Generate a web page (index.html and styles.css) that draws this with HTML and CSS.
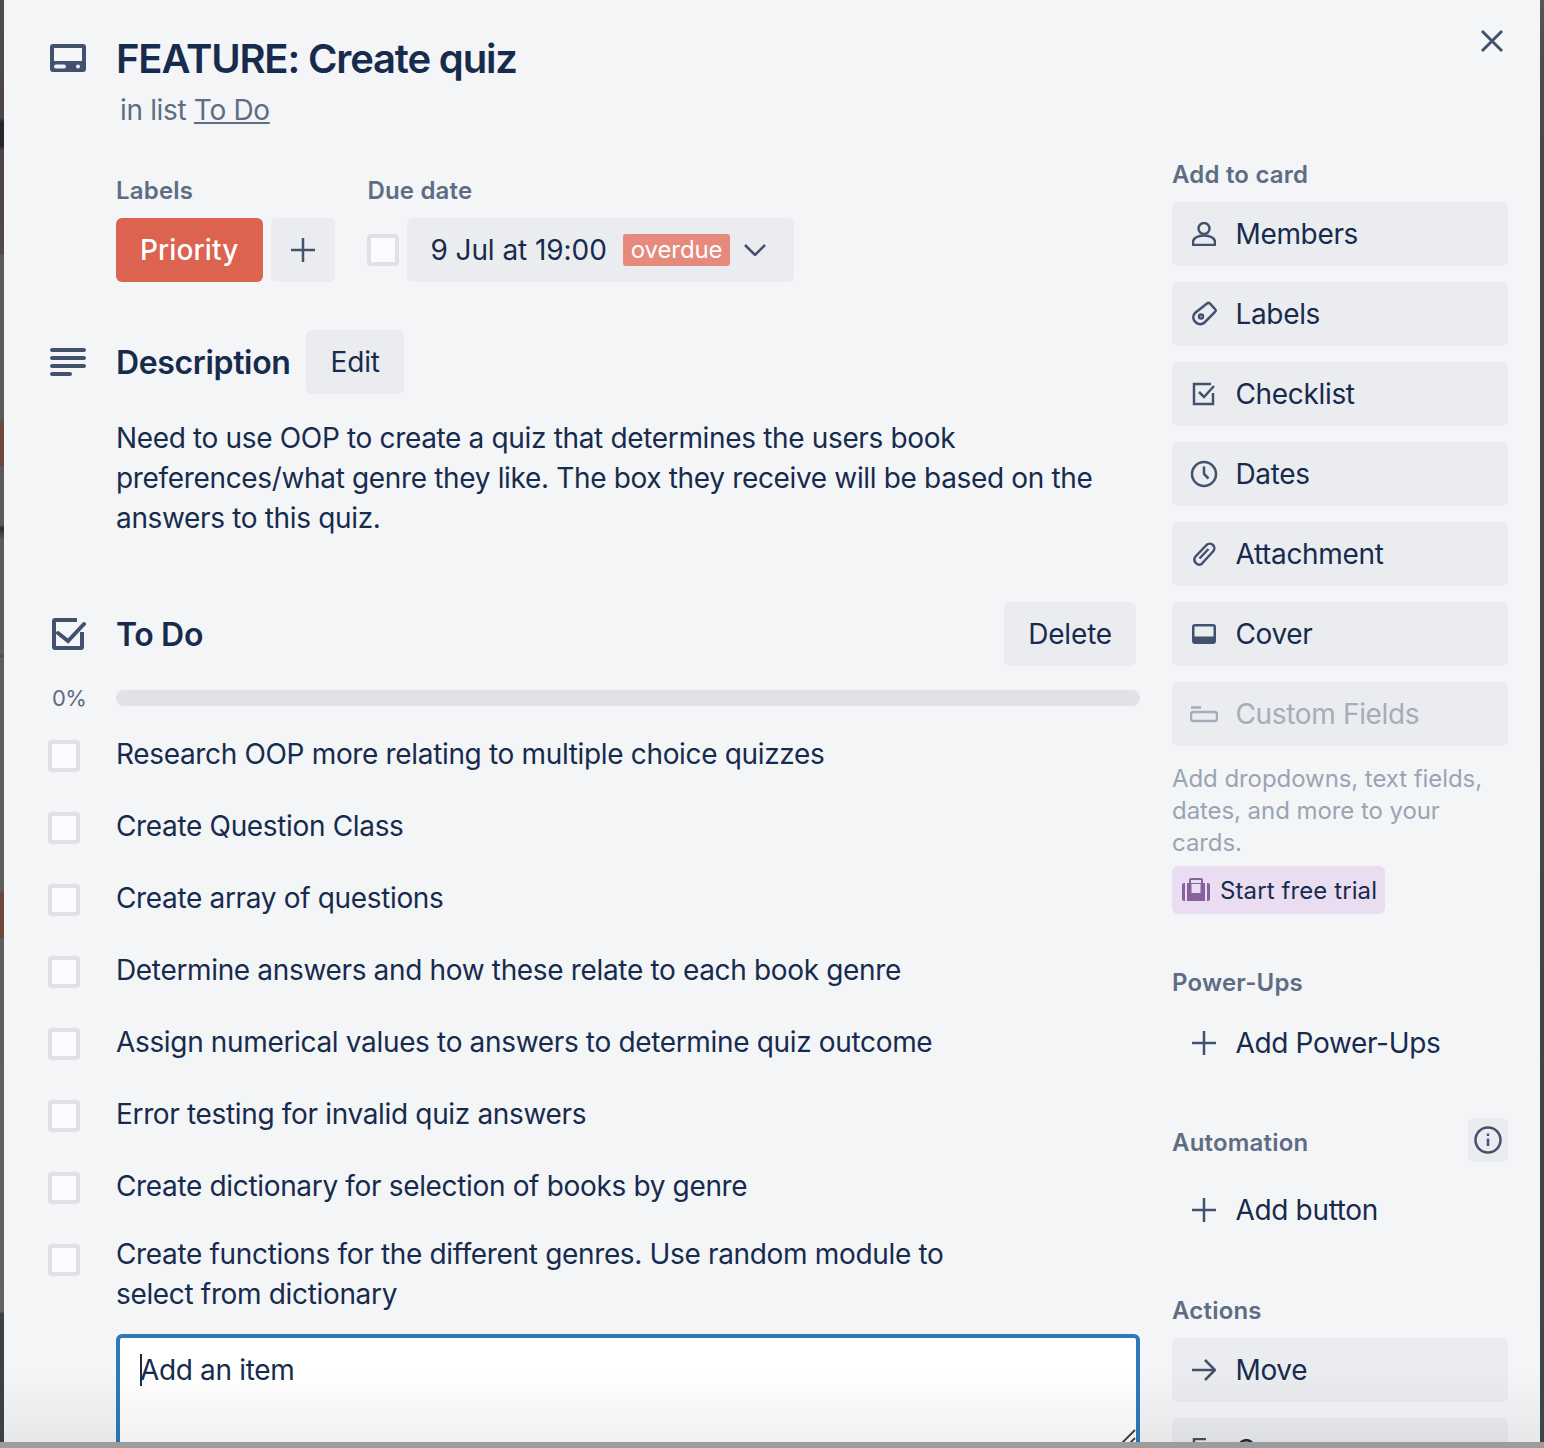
FILE: index.html
```html
<!DOCTYPE html>
<html lang="en">
<head>
  <meta charset="UTF-8">
  <title>FEATURE: Create quiz</title>
  <link rel="stylesheet" href="styles.css">
</head>
<body>
  <div class="screen">
    <div class="strip strip-left"></div>

    <div class="modal">
      <svg class="close" viewBox="0 0 24 24"><path d="M2 2 L22 22 M22 2 L2 22"/></svg>

      <header class="row title-row">
        <svg class="big-icon" viewBox="0 0 36 28"><path fill-rule="evenodd" d="M3 0h30a3 3 0 0 1 3 3v22a3 3 0 0 1-3 3H3a3 3 0 0 1-3-3V3a3 3 0 0 1 3-3zM4 4v13h28V4zM6 20.500a1.500 1.500 0 0 0 0 4h8a2 2 0 0 0 0-4zM28 20.500a2 2 0 0 0 0 4a2 2 0 0 0 0-4z"/></svg>
        <div>
          <h1>FEATURE: Create quiz</h1>
          <p class="in-list">in list <a href="#">To Do</a></p>
        </div>
      </header>

      <div class="columns">
        <main class="main">
          <div class="row meta-row">
            <span></span>
            <div class="meta">
              <div>
                <h3 class="small-head">Labels</h3>
                <div class="meta-line">
                  <span class="label">Priority</span>
                  <button class="btn btn-square"><svg class="icon" viewBox="0 0 24 24"><path class="line" d="M12 0V24M0 12H24"/></svg></button>
                </div>
              </div>
              <div>
                <h3 class="small-head">Due date</h3>
                <div class="meta-line">
                  <span class="check"></span>
                  <button class="btn btn-date">9 Jul at 19:00 <span class="overdue">overdue</span>
                    <svg class="chevron" viewBox="0 0 22 12"><path d="M1 1 L11 11 L21 1"/></svg>
                  </button>
                </div>
              </div>
            </div>
          </div>

          <section class="row desc-head">
            <svg class="big-icon" viewBox="0 0 36 28"><path d="M2 0h32a2 2 0 0 1 0 4H2a2 2 0 0 1 0-4zM2 8h32a2 2 0 0 1 0 4H2a2 2 0 0 1 0-4zM2 16h32a2 2 0 0 1 0 4H2a2 2 0 0 1 0-4zM2 24h18a2 2 0 0 1 0 4H2a2 2 0 0 1 0-4z"/></svg>
            <div class="head-line">
              <h2>Description</h2>
              <button class="btn btn-text btn-edit">Edit</button>
            </div>
          </section>
          <div class="row">
            <span></span>
            <p class="desc">Need to use OOP to create a quiz that determines the users book preferences/what genre they like. The box they receive will be based on the answers to this quiz.</p>
          </div>

          <section class="row todo-head">
            <svg class="todo-icon" viewBox="0 0 34 32"><path d="M30 14v15a1 1 0 0 1-1 1H3a1 1 0 0 1-1-1V3a1 1 0 0 1 1-1h22"/><path stroke-linecap="round" d="M6 15l10 8L32 6"/></svg>
            <div class="head-line spread">
              <h2>To Do</h2>
              <button class="btn btn-text">Delete</button>
            </div>
          </section>
          <div class="row progress-row">
            <span class="percent">0%</span>
            <div class="bar"></div>
          </div>

          <ul class="items">
            <li class="item"><span class="check"></span><span>Research OOP more relating to multiple choice quizzes</span></li>
            <li class="item"><span class="check"></span><span>Create Question Class</span></li>
            <li class="item"><span class="check"></span><span>Create array of questions</span></li>
            <li class="item"><span class="check"></span><span>Determine answers and how these relate to each book genre</span></li>
            <li class="item"><span class="check"></span><span>Assign numerical values to answers to determine quiz outcome</span></li>
            <li class="item"><span class="check"></span><span>Error testing for invalid quiz answers</span></li>
            <li class="item"><span class="check"></span><span>Create dictionary for selection of books by genre</span></li>
            <li class="item item-long"><span class="check"></span><span>Create functions for the different genres. Use random module to select from dictionary</span></li>
          </ul>

          <div class="row">
            <span></span>
            <div class="add-item"><span class="caret"></span>Add an item
              <svg class="grip" viewBox="0 0 16 16"><path d="M1 16L15 2M9 16L15 10"/></svg>
            </div>
          </div>
        </main>

        <aside class="side">
          <h3 class="small-head">Add to card</h3>
          <div class="side-list">
            <button class="btn side-btn"><svg class="icon" viewBox="0 0 24 24"><circle class="line" cx="12" cy="6.500" r="5.500"/><path class="line" d="M1 23v-3c0-4 5-6.500 11-6.500s11 2.500 11 6.500v3z"/></svg>Members</button>
            <button class="btn side-btn"><svg class="icon icon-big" viewBox="0 0 28 28"><path class="line" d="M17 3.500a2 2 0 0 1 2.800 0L25 9a2 2 0 0 1 0 2.800L14.500 22.500a6 6 0 0 1-8.500 0L5 21.500a6 6 0 0 1 0-8.500z"/><circle class="line" cx="11" cy="16.500" r="2"/></svg>Labels</button>
            <button class="btn side-btn"><svg class="icon" viewBox="0 0 24 24"><path class="line" d="M21 11v11H2V2h17"/><path class="line" d="M7 10l5 5L22 4"/></svg>Checklist</button>
            <button class="btn side-btn"><svg class="icon icon-big" viewBox="0 0 28 28"><circle class="line" cx="14" cy="14" r="12"/><path class="line" d="M14 6.500V14l4.500 4.500"/></svg>Dates</button>
            <button class="btn side-btn"><svg class="icon" viewBox="0 0 24 24"><path class="line" d="M9.500 22L21 9.500a4.500 4.500 0 0 0-6.500-6.500L3.500 14.500a5 5 0 0 0 7 7"/><path class="line" d="M7.500 16.500L16.500 7"/></svg>Attachment</button>
            <button class="btn side-btn"><svg class="icon" viewBox="0 0 24 20"><path fill-rule="evenodd" d="M3 0h18a3 3 0 0 1 3 3v14a3 3 0 0 1-3 3H3a3 3 0 0 1-3-3V3a3 3 0 0 1 3-3zM2.500 2.500v10h19v-10z"/></svg>Cover</button>
            <button class="btn side-btn is-muted"><svg class="icon icon-big" viewBox="0 0 28 16"><path class="line" d="M1 1.500H11"/><rect class="line" x="1" y="6" width="26" height="9" rx="2.500"/></svg>Custom Fields</button>
          </div>
          <p class="promo">Add dropdowns, text fields, dates, and more to your cards.</p>
          <button class="trial"><svg class="trial-icon" viewBox="0 0 28 24"><path fill-rule="evenodd" d="M2 5h1v18H2a2 2 0 0 1-2-2V7a2 2 0 0 1 2-2zM25 5h1a2 2 0 0 1 2 2v14a2 2 0 0 1-2 2h-1zM9 0h10a2 2 0 0 1 2 2v3h2v18H5V5h2V2a2 2 0 0 1 2-2zM9 2v3h10V2zM9.500 6v9h9V6z"/></svg>Start free trial</button>

          <h3 class="small-head head-power">Power-Ups</h3>
          <button class="btn side-btn is-plain"><svg class="icon" viewBox="0 0 24 24"><path class="line" d="M12 0V24M0 12H24"/></svg>Add Power-Ups</button>

          <div class="auto-head">
            <h3 class="small-head">Automation</h3>
            <button class="btn info"><svg class="info-icon" viewBox="0 0 28 28"><circle class="line" cx="14" cy="14" r="12.500"/><path class="line" d="M14 12.500V20M14 7.500V10"/></svg></button>
          </div>
          <button class="btn side-btn is-plain"><svg class="icon" viewBox="0 0 24 24"><path class="line" d="M12 0V24M0 12H24"/></svg>Add button</button>

          <h3 class="small-head head-actions">Actions</h3>
          <div class="side-list">
            <button class="btn side-btn"><svg class="icon" viewBox="0 0 24 24"><path class="line" d="M0 12H23M13 2l10 10L13 22"/></svg>Move</button>
            <button class="btn side-btn"><svg class="icon" viewBox="0 0 24 24"><path class="line" d="M14 1H2v16M7 6h15v17H7z"/></svg>Copy</button>
          </div>
        </aside>
      </div>

      <div class="fade"></div>
    </div>

    <div class="strip strip-right"></div>
  </div>
  <div class="bottom-edge"></div>
</body>
</html>
```

FILE: styles.css
```css
html, body {
  height: 100%;
}

body {
  margin: 0;
  height: 1448px;
  overflow: hidden;
  font-family: Inter, "Noto Sans", sans-serif;
  font-size: 28px;
  line-height: 40px;
  letter-spacing: -0.34px;
  color: #172b4d;
  background: #9b9b9b;
}

h1, h2, h3, p, ul {
  margin: 0;
  padding: 0;
}

button {
  font: inherit;
  letter-spacing: inherit;
  color: inherit;
  border: none;
  padding: 0;
  cursor: pointer;
}

.screen {
  display: flex;
  height: 1442px;
}

.bottom-edge {
  height: 6px;
  background: #9c9c9a;
}

.strip {
  flex: 0 0 4px;
}

/* board peeking out behind the modal */
.strip-left {
  background: linear-gradient(#4c4c4e 0, #4d4549 118px, #25252b 122px, #25252b 146px, #4d4549 150px, #4f474b 254px,
    #5b5b5b 255px, #5b5b5b 420px, #6e463c 421px, #6e463c 466px, #5b5b5b 467px, #5b5b5b 525px, #2a2a2e 528px, #5b5b5b 540px,
    #5b5b5b 655px, #444 656px, #5d5d5d 658px, #5d5d5d 892px, #6e463c 893px, #6e463c 938px, #5d5d5d 939px, #626262 1312px,
    #3a4247 1313px, #3a4247 1442px);
}

.strip-right {
  background: linear-gradient(#58565a 0, #4d4b4f 60px, #46484d 170px, #46474d 700px, #3f4449 1000px, #3a464c 1442px);
}

.modal {
  position: relative;
  flex: 1;
  overflow: hidden;
  background: #f4f5f7;
  padding: 36px 32px 0 44px;
}

.row {
  display: grid;
  grid-template-columns: 68px 1fr;
}

.close {
  position: absolute;
  top: 29px;
  right: 36px;
  width: 24px;
  height: 24px;
  fill: none;
  stroke: #42526e;
  stroke-width: 3;
}

.big-icon {
  width: 36px;
  height: 28px;
  margin-left: 2px;
  fill: #42526e;
}

.title-row .big-icon {
  margin-top: 8px;
}

h1 {
  margin-top: -1px;
  font-size: 40px;
  line-height: 48px;
  font-weight: 600;
  letter-spacing: -1.15px;
}

.in-list {
  margin: 7px 0 0 4px;
  color: #5e6c84;
}

.in-list a {
  color: #5e6c84;
}

.columns {
  display: flex;
  gap: 32px;
  position: relative;
}

.main {
  width: 1092px;
  flex: none;
}

.small-head {
  font-size: 24px;
  line-height: 32px;
  font-weight: 600;
  letter-spacing: 0.2px;
  color: #5e6c84;
}

.meta-row {
  margin-top: 45px;
}

.meta {
  display: flex;
  gap: 32px;
}

.meta-line {
  display: flex;
  align-items: center;
  gap: 8px;
  margin-top: 11px;
}

.label {
  height: 64px;
  padding: 0 25px 0 24px;
  display: flex;
  align-items: center;
  border-radius: 6px;
  background: #dc634f;
  color: #fff;
  font-weight: 500;
  letter-spacing: 0.1px;
}

.btn {
  background: #ebecf0;
  border-radius: 6px;
}

.btn-square {
  width: 64px;
  height: 64px;
  display: flex;
  align-items: center;
  justify-content: center;
}

.icon {
  width: 24px;
  height: 24px;
  flex: none;
  fill: #42526e;
}

.icon-big {
  width: 28px;
  height: 28px;
  margin: 0 -2px;
}

.line {
  fill: none;
  stroke: #42526e;
  stroke-width: 2.500;
}

.check {
  display: block;
  flex: none;
  width: 32px;
  height: 32px;
  box-sizing: border-box;
  border: 4px solid #dfe1e6;
  border-radius: 4px;
  background: #fafbfc;
}

.btn-date {
  height: 64px;
  padding: 0 28px 0 23px;
  display: flex;
  align-items: center;
  gap: 16px;
  letter-spacing: -0.07px;
}

.overdue {
  padding: 0 8px;
  height: 32px;
  line-height: 32px;
  font-size: 24px;
  letter-spacing: -0.1px;
  border-radius: 3px;
  background: #e58a7c;
  color: #fff;
}

.chevron {
  width: 22px;
  height: 12px;
  margin-left: -2px;
  fill: none;
  stroke: #42526e;
  stroke-width: 2.500;
}

.desc-head {
  margin-top: 48px;
  align-items: center;
}

.head-line {
  display: flex;
  align-items: center;
  gap: 15px;
}

.spread {
  justify-content: space-between;
  padding-right: 4px;
}

h2 {
  margin-top: 2px;
  font-size: 32px;
  line-height: 40px;
  font-weight: 600;
  letter-spacing: -0.35px;
}

.btn-text {
  height: 64px;
  padding: 0 24px;
  letter-spacing: -0.17px;
}

.btn-edit {
  padding: 0 24px 0 25px;
}

.desc {
  margin-top: 24px;
}

.todo-head {
  margin-top: 64px;
  align-items: center;
}

.todo-icon {
  width: 34px;
  height: 32px;
  margin-left: 4px;
  fill: none;
  stroke: #42526e;
  stroke-width: 4;
}

.progress-row {
  margin-top: 16px;
  height: 32px;
  align-items: center;
}

.percent {
  font-size: 22px;
  line-height: 32px;
  letter-spacing: -0.6px;
  color: #5e6c84;
  margin-left: 4px;
}

.bar {
  height: 16px;
  border-radius: 8px;
  background: #e1e2e6;
}

.items {
  list-style: none;
  margin-top: 12px;
}

.item {
  display: grid;
  grid-template-columns: 68px 1fr;
  height: 72px;
  padding-top: 8px;
  box-sizing: border-box;
}

.item .check {
  margin-top: 6px;
}

.item-long {
  height: auto;
  padding: 4px 140px 0 0;
}

.item-long .check {
  margin-top: 10px;
}

.add-item {
  position: relative;
  height: 160px;
  margin-top: 20px;
  padding: 12px 20px;
  box-sizing: border-box;
  border: 4px solid #2f79bb;
  border-radius: 6px;
  background: #fff;
}

.caret {
  position: absolute;
  left: 20px;
  top: 16px;
  width: 2px;
  height: 32px;
  background: #172b4d;
}

.grip {
  position: absolute;
  right: 0;
  top: 90px;
  width: 16px;
  height: 16px;
  fill: none;
  stroke: #444;
  stroke-width: 2;
}

.side {
  width: 336px;
  flex: none;
  margin-top: 29px;
}

.side-list {
  display: flex;
  flex-direction: column;
  gap: 16px;
  margin-top: 11px;
}

.side-btn {
  width: 100%;
  height: 64px;
  display: flex;
  align-items: center;
  gap: 19.500px;
  padding: 0 20px;
  box-sizing: border-box;
  text-align: left;
}

.is-plain {
  background: none;
}

.is-muted {
  color: #a5adba;
}

.is-muted .line {
  stroke: #a5adba;
}

.promo {
  margin-top: 17px;
  font-size: 24px;
  line-height: 32px;
  letter-spacing: -0.07px;
  color: #9aa4b4;
}

.trial {
  display: flex;
  align-items: center;
  gap: 10px;
  height: 48px;
  margin-top: 7px;
  padding: 2px 8px 0 10px;
  border-radius: 6px;
  background: #eadcf1;
  font-size: 24px;
  letter-spacing: 0.1px;
}

.trial-icon {
  width: 28px;
  height: 24px;
  margin-top: -2px;
  fill: #89609e;
}

.head-power {
  margin-top: 53px;
}

.head-power + .side-btn {
  margin-top: 12px;
}

.auto-head {
  display: flex;
  justify-content: space-between;
  align-items: flex-start;
  margin-top: 43px;
}

.auto-head .small-head {
  margin-top: 9px;
}

.info {
  width: 40px;
  height: 44px;
  display: flex;
  align-items: center;
  justify-content: center;
}

.info-icon {
  width: 28px;
  height: 28px;
}

.auto-head + .side-btn {
  margin-top: 16px;
}

.head-actions {
  margin-top: 53px;
}

.fade {
  position: absolute;
  left: 0;
  right: 0;
  bottom: 0;
  height: 72px;
  background: linear-gradient(rgba(0, 0, 0, 0), rgba(0, 0, 0, 0.055));
}
```
